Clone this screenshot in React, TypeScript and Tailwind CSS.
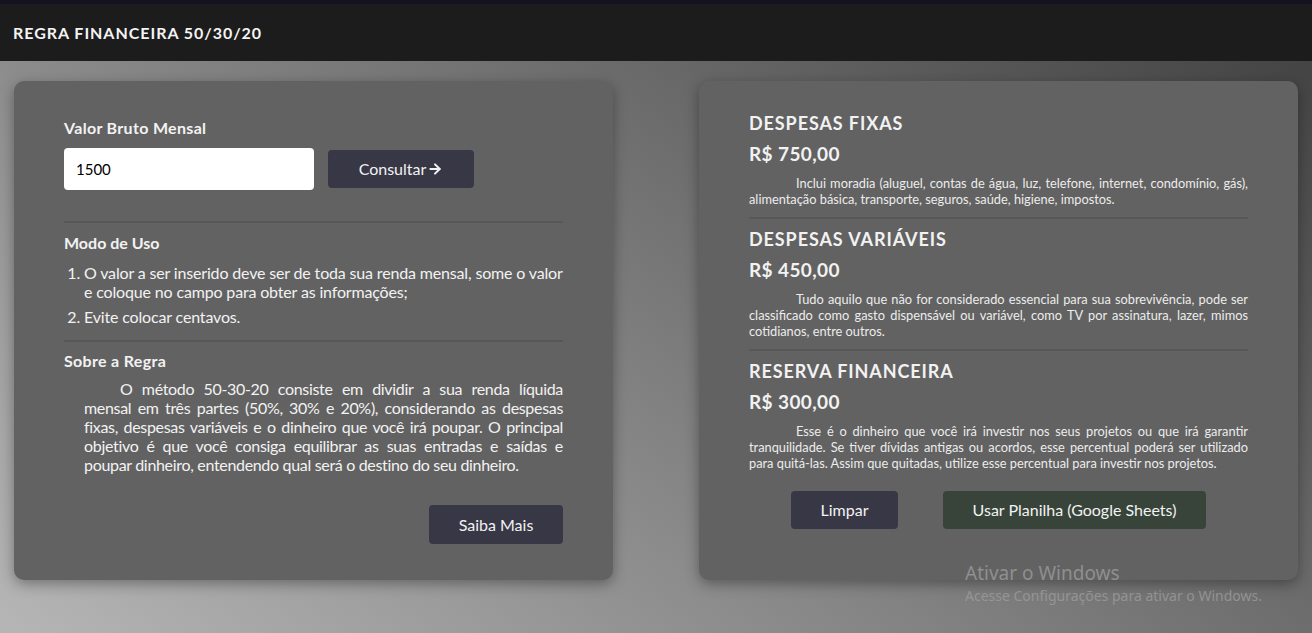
import { ArrowRight } from "lucide-react";

const sections = [
  {
    title: "DESPESAS FIXAS",
    value: "R$ 750,00",
    text: "Inclui moradia (aluguel, contas de água, luz, telefone, internet, condomínio, gás), alimentação básica, transporte, seguros, saúde, higiene, impostos.",
  },
  {
    title: "DESPESAS VARIÁVEIS",
    value: "R$ 450,00",
    text: "Tudo aquilo que não for considerado essencial para sua sobrevivência, pode ser classificado como gasto dispensável ou variável, como TV por assinatura, lazer, mimos cotidianos, entre outros.",
  },
  {
    title: "RESERVA FINANCEIRA",
    value: "R$ 300,00",
    text: "Esse é o dinheiro que você irá investir nos seus projetos ou que irá garantir tranquilidade. Se tiver dívidas antigas ou acordos, esse percentual poderá ser utilizado para quitá-las. Assim que quitadas, utilize esse percentual para investir nos projetos.",
  },
];

export default function App() {
  return (
    <div className="min-h-screen flex flex-col font-['Lato',sans-serif] text-[#f2f2f2]">
      <header className="h-[61px] border-t-4 border-[#13121f] bg-[#1c1c1c] flex items-center px-[13px]">
        <h1 className="text-[16px] font-bold tracking-[0.06em] text-[#f4f4f4]">
          REGRA FINANCEIRA 50/30/20
        </h1>
      </header>

      <main className="relative flex-1 flex justify-between items-stretch px-[14px] pt-[20px] pb-[53px] bg-[linear-gradient(37deg,#b6b6b6,#444444)]">
        {/* Calculadora */}
        <section className="w-[599px] rounded-[10px] bg-[#626262] shadow-[0_4px_14px_rgba(0,0,0,0.35)] px-[50px] pt-[37px] pb-[36px] flex flex-col">
          <label className="text-[16px] leading-[20px] font-bold tracking-[0.02em]">Valor Bruto Mensal</label>
          <div className="mt-[10px] flex items-center gap-[14px]">
            <input
              defaultValue="1500"
              className="w-[250px] h-[42px] rounded-[4px] bg-white px-[12px] text-[15px] text-black outline-none"
            />
            <button className="w-[146px] h-[38px] rounded-[4px] bg-[#383746] text-[16px] flex items-center justify-center gap-[1px]">
              Consultar
              <ArrowRight size={16} strokeWidth={3} />
            </button>
          </div>

          <div className="mt-[31px] h-[2px] bg-[#575757]" />

          <h2 className="mt-[10px] text-[16px] leading-[20px] font-bold">Modo de Uso</h2>
          <ol className="mt-[10px] list-decimal pl-[20px] text-[16px] leading-[19px] tracking-[-0.01em] space-y-[6px]">
            <li>
              O valor a ser inserido deve ser de toda sua renda mensal, some o valor e coloque no campo para obter as informações;
            </li>
            <li>Evite colocar centavos.</li>
          </ol>

          <div className="mt-[14px] h-[2px] bg-[#575757]" />

          <h2 className="mt-[9px] text-[16px] leading-[20px] font-bold tracking-[0.02em]">Sobre a Regra</h2>
          <p className="mt-[8px] ml-[20px] text-[16px] leading-[19px] tracking-[-0.02em] text-justify indent-[36px]">
            O método 50-30-20 consiste em dividir a sua renda líquida mensal em três partes (50%, 30% e 20%), considerando as despesas fixas, despesas variáveis e o dinheiro que você irá poupar. O principal objetivo é que você consiga equilibrar as suas entradas e saídas e poupar dinheiro, entendendo qual será o destino do seu dinheiro.
          </p>

          <div className="mt-auto flex justify-end">
            <button className="w-[134px] h-[39px] rounded-[4px] bg-[#383746] text-[16px]">Saiba Mais</button>
          </div>
        </section>

        {/* Resultados */}
        <section className="w-[599px] rounded-[10px] bg-[#626262] shadow-[0_4px_14px_rgba(0,0,0,0.35)] px-[50px] pt-[30px] pb-[51px] flex flex-col">
          {sections.map((s, i) => (
            <div key={s.title}>
              {i > 0 && <div className="mt-[10px] mb-[8px] h-[2px] bg-[#575757]" />}
              <h3 className="text-[18px] leading-[24px] font-bold tracking-[0.05em]">{s.title}</h3>
              <p className="mt-[7px] text-[19px] leading-[24px] font-bold tracking-[0.02em]">{s.value}</p>
              <p className="mt-[9px] text-[12.8px] leading-[16px] text-justify indent-[47px] text-[#ececec]">{s.text}</p>
            </div>
          ))}

          <div className="mt-[20px] flex justify-center gap-[45px]">
            <button className="w-[107px] h-[38px] rounded-[4px] bg-[#383746] text-[16px]">Limpar</button>
            <button className="w-[263px] h-[38px] rounded-[4px] bg-[#38443a] text-[16px]">
              Usar Planilha (Google Sheets)
            </button>
          </div>
        </section>

        {/* marca d'água do Windows */}
        <div className="absolute left-[965px] top-[500px] pointer-events-none font-['Noto_Sans',sans-serif] text-[#9c9c9c]/80">
          <div className="text-[19px] leading-[25px]">Ativar o Windows</div>
          <div className="text-[14px] leading-[20px]">Acesse Configurações para ativar o Windows.</div>
        </div>
      </main>
    </div>
  );
}
